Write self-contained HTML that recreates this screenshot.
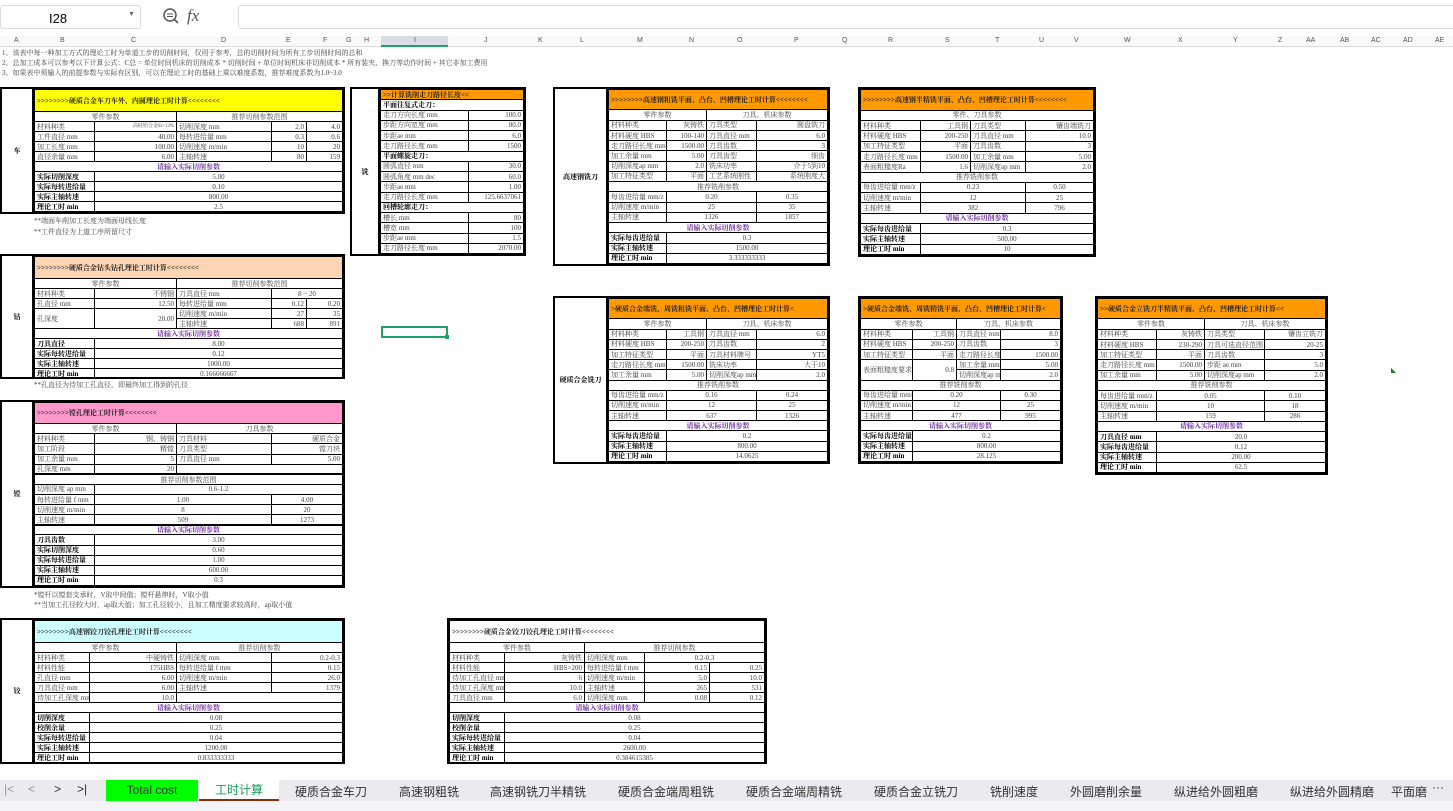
<!DOCTYPE html>
<html><head><meta charset="utf-8"><style>
*{margin:0;padding:0;box-sizing:border-box}
body{width:1453px;height:811px;overflow:hidden;background:#fff;font-family:"Liberation Serif","Noto Serif CJK SC",serif;position:relative}
.ui{font-family:"Liberation Sans","Noto Sans CJK SC",sans-serif}
.b{position:absolute;border:2px solid #000;display:flex;background:#fff}
.lab{border-right:2px solid #000;display:flex;align-items:center;justify-content:center;font-size:7px;font-weight:bold;flex:none}
table{border-collapse:collapse;width:100%;table-layout:fixed;font-size:7px}
td{border:1px solid #000;height:10px;line-height:8px;padding:0 2px;white-space:nowrap;overflow:hidden;color:#444}
.c{text-align:center}.r{text-align:right}
.hd td{font-weight:bold;color:#222;height:22px}
.sb td{border-top:2px solid #000}
.p{color:#7030a0;font-weight:bold;text-align:center}
.k{font-weight:bold;color:#000}
.note{position:absolute;font-size:7px;color:#444}
.col{position:absolute;top:37px;font-size:7px;color:#555;font-family:"Liberation Sans",sans-serif}
</style></head><body>
<div class="ui" style="position:absolute;left:0;top:5px;width:141px;height:24px;border:1px solid #ddd;border-radius:3px;font-size:13px;padding:5px 0 0 48px">I28<span style="position:absolute;right:5px;top:5px;font-size:7px;color:#666">▼</span></div>
<svg style="position:absolute;left:162px;top:7px" width="18" height="18" viewBox="0 0 18 18"><circle cx="8" cy="8" r="6" fill="none" stroke="#555" stroke-width="1.5"/><line x1="12.5" y1="12.5" x2="16" y2="16" stroke="#555" stroke-width="1.6"/><line x1="5" y1="7" x2="11" y2="7" stroke="#555"/><line x1="5" y1="9.5" x2="11" y2="9.5" stroke="#555"/></svg>
<div style="position:absolute;left:187px;top:6px;font-size:17px;font-style:italic;color:#555;font-family:'Liberation Serif',serif">fx</div>
<div style="position:absolute;left:238px;top:5px;width:1220px;height:24px;border:1px solid #ddd;border-radius:3px"></div>
<div style="position:absolute;left:0;top:36px;width:1453px;height:11px;background:#fafafa;border-bottom:1px solid #ddd"></div>
<div style="position:absolute;left:381px;top:36px;width:67px;height:11px;background:#d9dce2;border-bottom:2px solid #1ea366"></div>
<span class="col" style="left:14px">A</span><span class="col" style="left:60px">B</span><span class="col" style="left:131px">C</span><span class="col" style="left:221px">D</span><span class="col" style="left:286px">E</span><span class="col" style="left:323px">F</span><span class="col" style="left:346px">G</span><span class="col" style="left:364px">H</span><span class="col" style="left:414px">I</span><span class="col" style="left:484px">J</span><span class="col" style="left:538px">K</span><span class="col" style="left:580px">L</span><span class="col" style="left:637px">M</span><span class="col" style="left:689px">N</span><span class="col" style="left:737px">O</span><span class="col" style="left:794px">P</span><span class="col" style="left:842px">Q</span><span class="col" style="left:888px">R</span><span class="col" style="left:945px">S</span><span class="col" style="left:995px">T</span><span class="col" style="left:1039px">U</span><span class="col" style="left:1074px">V</span><span class="col" style="left:1124px">W</span><span class="col" style="left:1178px">X</span><span class="col" style="left:1233px">Y</span><span class="col" style="left:1278px">Z</span><span class="col" style="left:1306px">AA</span><span class="col" style="left:1340px">AB</span><span class="col" style="left:1371px">AC</span><span class="col" style="left:1403px">AD</span><span class="col" style="left:1435px">AE</span>
<div class="note" style="left:2px;top:48px">1、该表中每一种加工方式的理论工时为单道工步的切削时间，仅用于参考，总的切削时间为所有工步切削时间的总和</div>
<div class="note" style="left:2px;top:58px">2、总加工成本可以参考以下计算公式：C总 = 单位时间机床的切削成本 * 切削时间 + 单位时间机床非切削成本 * 所有装夹、换刀等动作时间 + 其它非加工费用</div>
<div class="note" style="left:2px;top:68px">3、如果表中须输入的前提参数与实际有区别，可以在理论工时的基础上乘以难度系数，推荐难度系数为1.0~3.0</div>

<div class="b" style="left:0;top:87px;width:345px;height:127px"><div class="lab" style="width:32px">车</div><table>
<colgroup><col style="width:60px"><col style="width:82px"><col style="width:95px"><col style="width:35px"><col></colgroup>
<tr class="hd"><td colspan="5" style="background:#ffff00">&gt;&gt;&gt;&gt;&gt;&gt;&gt;&gt;硬质合金车刀车外、内圆理论工时计算&lt;&lt;&lt;&lt;&lt;&lt;&lt;&lt;</td></tr>
<tr><td colspan="2" class="c">零件参数</td><td colspan="3" class="c">推荐切削参数范围</td></tr>
<tr><td>材料种类</td><td class="r" style="font-size:5px">高硅铝合金Si&gt;13%</td><td>切削深度 mm</td><td class="r">2.0</td><td class="r">4.0</td></tr>
<tr><td>工件直径 mm</td><td class="r">40.00</td><td>每转进给量 mm</td><td class="r">0.3</td><td class="r">0.6</td></tr>
<tr><td>加工长度 mm</td><td class="r">100.00</td><td>切削速度 m/min</td><td class="r">10</td><td class="r">20</td></tr>
<tr><td>直径余量 mm</td><td class="r">6.00</td><td>主轴转速</td><td class="r">80</td><td class="r">159</td></tr>
<tr><td colspan="5" class="p">请输入实际切削参数</td></tr>
<tr><td class="k">实际切削深度</td><td colspan="4" class="c">5.00</td></tr>
<tr><td class="k">实际每转进给量</td><td colspan="4" class="c">0.10</td></tr>
<tr><td class="k">实际主轴转速</td><td colspan="4" class="c">800.00</td></tr>
<tr><td class="k">理论工时 min</td><td colspan="4" class="c">2.5</td></tr></table></div>
<div class="note" style="left:34px;top:216px">**端面车削加工长度为端面母线长度</div>
<div class="note" style="left:34px;top:227px">**工件直径为上道工序所留尺寸</div>

<div class="b" style="left:350px;top:87px;width:176px;height:169px"><div class="lab" style="width:28px">铣</div><table>
<colgroup><col style="width:88px"><col></colgroup>
<tr class="hd"><td colspan="2" style="background:#ff9900;height:10px">&gt;&gt;计算铣削走刀路径长度&lt;&lt;</td></tr>
<tr><td colspan="2" class="k">平面往复式走刀：</td></tr>
<tr><td>走刀方向长度 mm</td><td class="r">100.0</td></tr>
<tr><td>步距方向宽度 mm</td><td class="r">80.0</td></tr>
<tr><td>步距ae mm</td><td class="r">6.0</td></tr>
<tr><td>走刀路径长度 mm</td><td class="r">1500</td></tr>
<tr><td colspan="2" class="k">平面螺旋走刀：</td></tr>
<tr><td>圆弧直径 mm</td><td class="r">30.0</td></tr>
<tr><td>圆弧角度 mm dec</td><td class="r">60.0</td></tr>
<tr><td>步距ae mm</td><td class="r">1.00</td></tr>
<tr><td>走刀路径长度 mm</td><td class="r">125.6637061</td></tr>
<tr><td colspan="2" class="k">回槽轮廓走刀：</td></tr>
<tr><td>槽长 mm</td><td class="r">80</td></tr>
<tr><td>槽宽 mm</td><td class="r">100</td></tr>
<tr><td>步距ae mm</td><td class="r">1.5</td></tr>
<tr><td>走刀路径长度 mm</td><td class="r">2070.00</td></tr></table></div>

<div class="b" style="left:553px;top:87px;width:277px;height:179px"><div class="lab" style="width:53px">高速钢铣刀</div><table>
<colgroup><col style="width:58px"><col style="width:40px"><col style="width:50px"><col></colgroup>
<tr class="hd"><td colspan="4" style="background:#ff9900;height:20px">&gt;&gt;&gt;&gt;&gt;&gt;&gt;&gt;高速钢粗铣平面、凸台、凹槽理论工时计算&lt;&lt;&lt;&lt;&lt;&lt;&lt;&lt;</td></tr>
<tr><td colspan="2" class="c">零件参数</td><td colspan="2" class="c">刀具、机床参数</td></tr>
<tr><td>材料种类</td><td class="r">灰铸铁</td><td>刀具类型</td><td class="r">圆盘铣刀</td></tr>
<tr><td>材料硬度 HBS</td><td class="r">100-140</td><td>刀具直径 mm</td><td class="r">6.0</td></tr>
<tr><td>走刀路径长度 mm</td><td class="r">1500.00</td><td>刀具齿数</td><td class="r">3</td></tr>
<tr><td>加工余量 mm</td><td class="r">5.00</td><td>刀具齿型</td><td class="r">细齿</td></tr>
<tr><td>切削深度ap mm</td><td class="r">2.0</td><td>铣床功率</td><td class="r">介于5到10</td></tr>
<tr><td>加工特征类型</td><td class="r">平面</td><td>工艺系统刚性</td><td class="r">系统刚度大</td></tr>
<tr><td colspan="4" class="c">推荐铣削参数</td></tr>
<tr><td>每齿进给量 mm/z</td><td colspan="2" class="c">0.20</td><td class="c">0.35</td></tr>
<tr><td>切削速度 m/min</td><td colspan="2" class="c">25</td><td class="c">35</td></tr>
<tr><td>主轴转速</td><td colspan="2" class="c">1326</td><td class="c">1857</td></tr>
<tr><td colspan="4" class="p">请输入实际切削参数</td></tr>
<tr><td class="k">实际每齿进给量</td><td colspan="3" class="c">0.3</td></tr>
<tr><td class="k">实际主轴转速</td><td colspan="3" class="c">1500.00</td></tr>
<tr><td class="k">理论工时 min</td><td colspan="3" class="c">3.333333333</td></tr></table></div>

<div class="b" style="left:858px;top:87px;width:238px;height:170px"><table>
<colgroup><col style="width:60px"><col style="width:50px"><col style="width:55px"><col></colgroup>
<tr class="hd"><td colspan="4" style="background:#ff9900;height:20px">&gt;&gt;&gt;&gt;&gt;&gt;&gt;&gt;高速钢半精铣平面、凸台、凹槽理论工时计算&lt;&lt;&lt;&lt;&lt;&lt;&lt;&lt;</td></tr>
<tr><td colspan="4" class="c">零件、刀具参数</td></tr>
<tr><td>材料种类</td><td class="r">工具钢</td><td>刀具类型</td><td class="r">镶齿端铣刀</td></tr>
<tr><td>材料硬度 HBS</td><td class="r">200-250</td><td>刀具直径 mm</td><td class="r">10.0</td></tr>
<tr><td>加工特征类型</td><td class="r">平面</td><td>刀具齿数</td><td class="r">3</td></tr>
<tr><td>走刀路径长度 mm</td><td class="r">1500.00</td><td>加工余量 mm</td><td class="r">5.00</td></tr>
<tr><td>表面粗糙度Ra</td><td class="r">1.6</td><td>切削深度ap mm</td><td class="r">2.0</td></tr>
<tr><td colspan="4" class="c">推荐铣削参数</td></tr>
<tr><td>每齿进给量 mm/z</td><td colspan="2" class="c">0.23</td><td class="c">0.50</td></tr>
<tr><td>切削速度 m/min</td><td colspan="2" class="c">12</td><td class="c">25</td></tr>
<tr><td>主轴转速</td><td colspan="2" class="c">382</td><td class="c">796</td></tr>
<tr><td colspan="4" class="p">请输入实际切削参数</td></tr>
<tr><td class="k">实际每齿进给量</td><td colspan="3" class="c">0.3</td></tr>
<tr><td class="k">实际主轴转速</td><td colspan="3" class="c">500.00</td></tr>
<tr><td class="k">理论工时 min</td><td colspan="3" class="c">10</td></tr></table></div>

<div class="b" style="left:0;top:254px;width:345px;height:125px"><div class="lab" style="width:32px">钻</div><table>
<colgroup><col style="width:60px"><col style="width:82px"><col style="width:95px"><col style="width:35px"><col></colgroup>
<tr class="hd"><td colspan="5" style="background:#fcd5b4">&gt;&gt;&gt;&gt;&gt;&gt;&gt;&gt;硬质合金钻头钻孔理论工时计算&lt;&lt;&lt;&lt;&lt;&lt;&lt;&lt;</td></tr>
<tr><td colspan="2" class="c">零件参数</td><td colspan="3" class="c">推荐切削参数范围</td></tr>
<tr><td>材料种类</td><td class="r">不锈钢</td><td>刀具直径 mm</td><td colspan="2" class="c">8 ~ 20</td></tr>
<tr><td>孔直径 mm</td><td class="r">12.50</td><td>每转进给量 mm</td><td class="r">0.12</td><td class="r">0.20</td></tr>
<tr><td rowspan="2">孔深度</td><td rowspan="2" class="r">20.00</td><td>切削速度 m/min</td><td class="r">27</td><td class="r">35</td></tr>
<tr><td>主轴转速</td><td class="r">688</td><td class="r">891</td></tr>
<tr><td colspan="5" class="p">请输入实际切削参数</td></tr>
<tr><td class="k">刀具直径</td><td colspan="4" class="c">8.00</td></tr>
<tr><td class="k">实际每转进给量</td><td colspan="4" class="c">0.12</td></tr>
<tr><td class="k">实际主轴转速</td><td colspan="4" class="c">1000.00</td></tr>
<tr><td class="k">理论工时 min</td><td colspan="4" class="c">0.166666667</td></tr></table></div>
<div class="note" style="left:34px;top:380px">**孔直径为待加工孔直径，即最终加工得到的孔径</div>

<div class="b" style="left:0;top:400px;width:345px;height:188px"><div class="lab" style="width:32px">镗</div><table>
<colgroup><col style="width:60px"><col style="width:82px"><col style="width:95px"><col></colgroup>
<tr class="hd"><td colspan="4" style="background:#ff99cc;height:21px">&gt;&gt;&gt;&gt;&gt;&gt;&gt;&gt;镗孔理论工时计算&lt;&lt;&lt;&lt;&lt;&lt;&lt;&lt;</td></tr>
<tr><td colspan="2" class="c">零件参数</td><td colspan="2" class="c">刀具参数</td></tr>
<tr><td>材料种类</td><td class="r">钢、铸钢</td><td>刀具材料</td><td class="r">硬质合金</td></tr>
<tr><td>加工阶段</td><td class="r">精镗</td><td>刀具类型</td><td class="r">镗刀块</td></tr>
<tr><td>加工余量 mm</td><td class="r">5</td><td>刀具直径 mm</td><td class="r">5.00</td></tr>
<tr><td>孔深度 mm</td><td class="r">20</td><td colspan="2"></td></tr>
<tr class="sb"><td colspan="4" class="c">推荐切削参数范围</td></tr>
<tr><td>切削深度 ap mm</td><td colspan="3" class="c">0.6-1.2</td></tr>
<tr><td>每转进给量 f mm</td><td colspan="2" class="c">1.00</td><td class="c">4.00</td></tr>
<tr><td>切削速度 m/min</td><td colspan="2" class="c">8</td><td class="c">20</td></tr>
<tr><td>主轴转速</td><td colspan="2" class="c">509</td><td class="c">1273</td></tr>
<tr class="sb"><td colspan="4" class="p">请输入实际切削参数</td></tr>
<tr><td class="k">刀具齿数</td><td colspan="3" class="c">3.00</td></tr>
<tr><td class="k">实际切削深度</td><td colspan="3" class="c">0.60</td></tr>
<tr><td class="k">实际每转进给量</td><td colspan="3" class="c">1.00</td></tr>
<tr><td class="k">实际主轴转速</td><td colspan="3" class="c">600.00</td></tr>
<tr><td class="k">理论工时 min</td><td colspan="3" class="c">0.3</td></tr></table></div>
<div class="note" style="left:34px;top:590px">*镗杆以镗套支承时，V取中间值；镗杆悬伸时，V取小值</div>
<div class="note" style="left:34px;top:600px">**当加工孔径较大时，ap取大值；加工孔径较小，且加工精度要求较高时，ap取小值</div>

<div class="b" style="left:553px;top:296px;width:277px;height:168px"><div class="lab" style="width:53px">硬质合金铣刀</div><table>
<colgroup><col style="width:58px"><col style="width:40px"><col style="width:50px"><col></colgroup>
<tr class="hd"><td colspan="4" style="background:#ff9900;height:20px">&gt;硬质合金端铣、周铣粗铣平面、凸台、凹槽理论工时计算&lt;</td></tr>
<tr><td colspan="2" class="c">零件参数</td><td colspan="2" class="c">刀具、机床参数</td></tr>
<tr><td>材料种类</td><td class="r">工具钢</td><td>刀具直径 mm</td><td class="r">6.0</td></tr>
<tr><td>材料硬度 HBS</td><td class="r">200-250</td><td>刀具齿数</td><td class="r">2</td></tr>
<tr><td>加工特征类型</td><td class="r">平面</td><td>刀具材料牌号</td><td class="r">YT5</td></tr>
<tr><td>走刀路径长度 mm</td><td class="r">1500.00</td><td>铣床功率</td><td class="r">大于10</td></tr>
<tr><td>加工余量 mm</td><td class="r">5.00</td><td>切削深度ap mm</td><td class="r">2.0</td></tr>
<tr><td colspan="4" class="c">推荐铣削参数</td></tr>
<tr><td>每齿进给量 mm/z</td><td colspan="2" class="c">0.16</td><td class="c">0.24</td></tr>
<tr><td>切削速度 m/min</td><td colspan="2" class="c">12</td><td class="c">25</td></tr>
<tr><td>主轴转速</td><td colspan="2" class="c">637</td><td class="c">1326</td></tr>
<tr><td colspan="4" class="p">请输入实际切削参数</td></tr>
<tr><td class="k">实际每齿进给量</td><td colspan="3" class="c">0.2</td></tr>
<tr><td class="k">实际主轴转速</td><td colspan="3" class="c">800.00</td></tr>
<tr><td class="k">理论工时 min</td><td colspan="3" class="c">14.0625</td></tr></table></div>

<div class="b" style="left:858px;top:296px;width:205px;height:168px"><table>
<colgroup><col style="width:52px"><col style="width:44px"><col style="width:44px"><col></colgroup>
<tr class="hd"><td colspan="4" style="background:#ff9900;height:20px">&gt;硬质合金端铣、周铣精铣平面、凸台、凹槽理论工时计算&lt;</td></tr>
<tr><td colspan="2" class="c">零件参数</td><td colspan="2" class="c">刀具、机床参数</td></tr>
<tr><td>材料种类</td><td class="r">工具钢</td><td>刀具直径 mm</td><td class="r">8.0</td></tr>
<tr><td>材料硬度 HBS</td><td class="r">200-250</td><td>刀具齿数</td><td class="r">3</td></tr>
<tr><td>加工特征类型</td><td class="r">平面</td><td>走刀路径长度</td><td class="r">1500.00</td></tr>
<tr><td rowspan="2">表面粗糙度要求Ra</td><td rowspan="2" class="r">0.8</td><td>加工余量 mm</td><td class="r">5.00</td></tr>
<tr><td>切削深度ap mm</td><td class="r">2.0</td></tr>
<tr><td colspan="4" class="c">推荐铣削参数</td></tr>
<tr><td>每齿进给量 mm/z</td><td colspan="2" class="c">0.20</td><td class="c">0.30</td></tr>
<tr><td>切削速度 m/min</td><td colspan="2" class="c">12</td><td class="c">25</td></tr>
<tr><td>主轴转速</td><td colspan="2" class="c">477</td><td class="c">995</td></tr>
<tr><td colspan="4" class="p">请输入实际切削参数</td></tr>
<tr><td class="k">实际每齿进给量</td><td colspan="3" class="c">0.2</td></tr>
<tr><td class="k">实际主轴转速</td><td colspan="3" class="c">800.00</td></tr>
<tr><td class="k">理论工时 min</td><td colspan="3" class="c">28.125</td></tr></table></div>

<div class="b" style="left:1095px;top:296px;width:233px;height:179px"><table>
<colgroup><col style="width:59px"><col style="width:48px"><col style="width:60px"><col></colgroup>
<tr class="hd"><td colspan="4" style="background:#ff9900;height:20px">&gt;&gt;硬质合金立铣刀半精铣平面、凸台、凹槽理论工时计算&lt;&lt;</td></tr>
<tr><td colspan="2" class="c">零件参数</td><td colspan="2" class="c">刀具、机床参数</td></tr>
<tr><td>材料种类</td><td class="r">灰铸铁</td><td>刀具类型</td><td class="r">镶齿立铣刀</td></tr>
<tr><td>材料硬度 HBS</td><td class="r">230-290</td><td>刀具可选直径范围</td><td class="r">20-25</td></tr>
<tr><td>加工特征类型</td><td class="r">平面</td><td>刀具齿数</td><td class="r">3</td></tr>
<tr><td>走刀路径长度 mm</td><td class="r">1500.00</td><td>步距 ae mm</td><td class="r">5.0</td></tr>
<tr><td>加工余量 mm</td><td class="r">5.00</td><td>切削深度ap mm</td><td class="r">2.0</td></tr>
<tr><td colspan="4" class="c">推荐铣削参数</td></tr>
<tr><td>每齿进给量 mm/z</td><td colspan="2" class="c">0.05</td><td class="c">0.10</td></tr>
<tr><td>切削速度 m/min</td><td colspan="2" class="c">10</td><td class="c">18</td></tr>
<tr><td>主轴转速</td><td colspan="2" class="c">159</td><td class="c">286</td></tr>
<tr><td colspan="4" class="p">请输入实际切削参数</td></tr>
<tr><td class="k">刀具直径 mm</td><td colspan="3" class="c">20.0</td></tr>
<tr><td class="k">实际每齿进给量</td><td colspan="3" class="c">0.12</td></tr>
<tr><td class="k">实际主轴转速</td><td colspan="3" class="c">200.00</td></tr>
<tr><td class="k">理论工时 min</td><td colspan="3" class="c">62.5</td></tr></table></div>
<div style="position:absolute;left:1391px;top:368px;width:0;height:0;border-left:5px solid transparent;border-top:5px solid #1a7a1a;transform:rotate(180deg)"></div>

<div class="b" style="left:0;top:618px;width:345px;height:146px"><div class="lab" style="width:32px">铰</div><table>
<colgroup><col style="width:55px"><col style="width:87px"><col style="width:95px"><col></colgroup>
<tr class="hd"><td colspan="4" style="background:#ccffff">&gt;&gt;&gt;&gt;&gt;&gt;&gt;&gt;高速钢铰刀铰孔理论工时计算&lt;&lt;&lt;&lt;&lt;&lt;&lt;&lt;</td></tr>
<tr><td colspan="2" class="c">零件参数</td><td colspan="2" class="c">推荐切削参数</td></tr>
<tr><td>材料种类</td><td class="r">中硬铸铁</td><td>切削深度 mm</td><td class="r">0.2-0.3</td></tr>
<tr><td>材料性能</td><td class="r">175HBS</td><td>每转进给量 f mm</td><td class="r">0.15</td></tr>
<tr><td>孔直径 mm</td><td class="r">6.00</td><td>切削速度 m/min</td><td class="r">26.0</td></tr>
<tr><td>刀具直径 mm</td><td class="r">6.00</td><td>主轴转速</td><td class="r">1379</td></tr>
<tr><td>待加工孔深度 mm</td><td class="r">10.0</td><td colspan="2"></td></tr>
<tr><td colspan="4" class="p">请输入实际切削参数</td></tr>
<tr><td class="k">切削深度</td><td colspan="3" class="c">0.08</td></tr>
<tr><td class="k">校削余量</td><td colspan="3" class="c">0.25</td></tr>
<tr><td class="k">实际每转进给量</td><td colspan="3" class="c">0.04</td></tr>
<tr><td class="k">实际主轴转速</td><td colspan="3" class="c">1200.00</td></tr>
<tr><td class="k">理论工时 min</td><td colspan="3" class="c">0.833333333</td></tr></table></div>

<div class="b" style="left:447px;top:618px;width:320px;height:146px"><table>
<colgroup><col style="width:55px"><col style="width:80px"><col style="width:60px"><col style="width:65px"><col></colgroup>
<tr class="hd"><td colspan="5">&gt;&gt;&gt;&gt;&gt;&gt;&gt;&gt;硬质合金铰刀铰孔理论工时计算&lt;&lt;&lt;&lt;&lt;&lt;&lt;&lt;</td></tr>
<tr><td colspan="2" class="c">零件参数</td><td colspan="3" class="c">推荐切削参数</td></tr>
<tr><td>材料种类</td><td class="r">灰铸铁</td><td>切削深度 mm</td><td colspan="2" class="c">0.2-0.3</td></tr>
<tr><td>材料性能</td><td class="r">HBS&gt;200</td><td>每转进给量 f mm</td><td class="r">0.15</td><td class="r">0.25</td></tr>
<tr><td>待加工孔直径 mm</td><td class="r">6</td><td>切削速度 m/min</td><td class="r">5.0</td><td class="r">10.0</td></tr>
<tr><td>待加工孔深度 mm</td><td class="r">10.0</td><td>主轴转速</td><td class="r">265</td><td class="r">531</td></tr>
<tr><td>刀具直径 mm</td><td class="r">6.0</td><td>切削深度 mm</td><td class="r">0.08</td><td class="r">0.12</td></tr>
<tr><td colspan="5" class="p">请输入实际切削参数</td></tr>
<tr><td class="k">切削深度</td><td colspan="4" class="c">0.08</td></tr>
<tr><td class="k">校削余量</td><td colspan="4" class="c">0.25</td></tr>
<tr><td class="k">实际每转进给量</td><td colspan="4" class="c">0.04</td></tr>
<tr><td class="k">实际主轴转速</td><td colspan="4" class="c">2600.00</td></tr>
<tr><td class="k">理论工时 min</td><td colspan="4" class="c">0.384615385</td></tr></table></div>

<div style="position:absolute;left:381px;top:326px;width:67px;height:12px;border:2px solid #1ea366"></div>
<div style="position:absolute;left:445px;top:335px;width:4px;height:4px;background:#1ea366"></div>

<div class="ui" style="position:absolute;left:0;top:780px;width:1453px;height:21px;background:#ebebef;font-size:12px;color:#333">
<span style="position:absolute;left:4px;top:2px;color:#999">|&lt;</span><span style="position:absolute;left:28px;top:2px;color:#999">&lt;</span><span style="position:absolute;left:54px;top:2px">&gt;</span><span style="position:absolute;left:77px;top:2px">&gt;|</span>
<div style="position:absolute;left:106px;top:0;width:92px;height:21px;background:#00ff00;text-align:center;line-height:21px">Total cost</div>
<div style="position:absolute;left:199px;top:0;width:80px;height:21px;background:#fff;text-align:center;line-height:20px;color:#1a9a5a;border-bottom:2px solid #8b2e0b">工时计算</div>
<span style="position:absolute;left:295px;top:3px">硬质合金车刀</span>
<span style="position:absolute;left:399px;top:3px">高速钢粗铣</span>
<span style="position:absolute;left:490px;top:3px">高速钢铣刀半精铣</span>
<span style="position:absolute;left:618px;top:3px">硬质合金端周粗铣</span>
<span style="position:absolute;left:746px;top:3px">硬质合金端周精铣</span>
<span style="position:absolute;left:874px;top:3px">硬质合金立铣刀</span>
<span style="position:absolute;left:990px;top:3px">铣削速度</span>
<span style="position:absolute;left:1070px;top:3px">外圆磨削余量</span>
<span style="position:absolute;left:1174px;top:3px">纵进给外圆粗磨</span>
<span style="position:absolute;left:1290px;top:3px">纵进给外圆精磨</span>
<span style="position:absolute;left:1391px;top:3px;width:40px;overflow:hidden;white-space:nowrap">平面磨</span>
<span style="position:absolute;left:1432px;top:0;background:#ebebef;width:21px">···</span>
</div>
<div style="position:absolute;left:0;top:801px;width:1453px;height:10px;background:#f5f5f7"></div>
</body></html>
